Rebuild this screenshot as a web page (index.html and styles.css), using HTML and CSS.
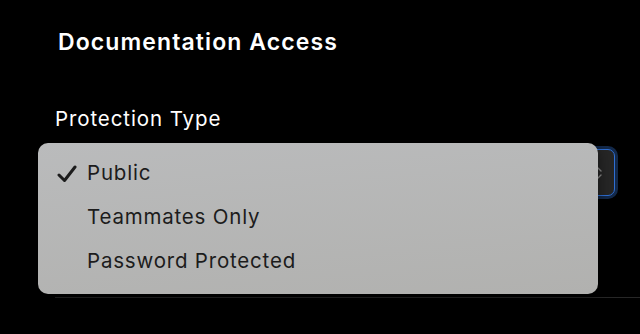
FILE: index.html
```html
<!DOCTYPE html>
<html lang="en">
<head>
    <meta charset="UTF-8">
    <meta name="viewport" content="width=device-width, initial-scale=1.0">
    <title>Documentation Access</title>
    <link rel="stylesheet" href="styles.css">
</head>
<body>
    <div class="panel">
        <h2 class="panel-title">Documentation Access</h2>

        <div class="field">
            <label class="field-label">Protection Type</label>
            <div class="select-wrap">
                <div class="select-box">
                    <svg class="select-arrows" width="8" height="14" viewBox="0 0 8 14">
                        <path d="M1 5 L4 2 L7 5 M1 9 L4 12 L7 9" fill="none" stroke="#8a8a8a" stroke-width="1.4" stroke-linecap="round" stroke-linejoin="round"/>
                    </svg>
                </div>

                <ul class="menu">
                    <li class="menu-item checked">
                        <svg class="check" width="20" height="18" viewBox="0 0 20 18">
                            <path d="M2 10 L7.5 15.5 L18 2" fill="none" stroke="#1c1c1c" stroke-width="3" stroke-linecap="round" stroke-linejoin="round"/>
                        </svg>
                        Public
                    </li>
                    <li class="menu-item">Teammates Only</li>
                    <li class="menu-item">Password Protected</li>
                </ul>
            </div>
        </div>

        <div class="divider"></div>
    </div>
</body>
</html>
```

FILE: styles.css
```css
body {
    margin: 0;
    background: #000;
    color: #fff;
    font-family: 'Inter', 'Noto Sans', sans-serif;
    -webkit-font-smoothing: antialiased;
}

.panel {
    padding: 28px 0 0 55px;
}

.panel-title {
    margin: 0 0 0 3px;
    font-size: 23px;
    font-weight: 600;
    line-height: 28px;
    letter-spacing: 1.1px;
}

.field {
    margin-top: 50px;
}

.field-label {
    display: block;
    font-size: 20.5px;
    line-height: 26px;
    letter-spacing: 0.9px;
}

.select-wrap {
    position: relative;
    margin-top: 17px;
    width: 560px;
}

.select-box {
    display: flex;
    align-items: center;
    justify-content: flex-end;
    height: 45px;
    padding: 0 12px;
    background: #262626;
    border: 1px solid #2f6fd4;
    border-radius: 7px;
    box-shadow: 0 0 0 3px #13294a;
}

.menu {
    position: absolute;
    top: -6px;
    left: -17px;
    width: 560px;
    margin: 0;
    padding: 8px 0 11px;
    list-style: none;
    background: linear-gradient(175deg, #babbbc 0%, #b1b1af 100%);
    border-radius: 10px;
    box-shadow: 0 4px 14px rgba(0,0,0,0.5);
}

.menu-item {
    position: relative;
    height: 44px;
    line-height: 44px;
    padding-left: 49px;
    color: #1c1c1c;
    font-size: 20.5px;
    letter-spacing: 0.8px;
}

.check {
    position: absolute;
    left: 19px;
    top: 14px;
}

.divider {
    margin-top: 101px;
    height: 1px;
    background: #272727;
}
```
